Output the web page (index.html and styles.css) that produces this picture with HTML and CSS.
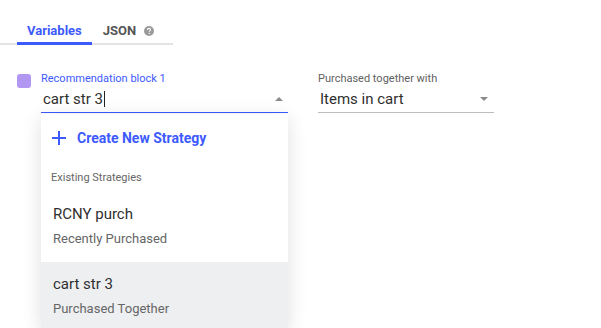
FILE: index.html
```html
<!DOCTYPE html>
<html lang="en">
<head>
    <meta charset="UTF-8">
    <meta name="viewport" content="width=device-width, initial-scale=1.0">
    <title>Recommendation block</title>
    <link rel="stylesheet" href="styles.css">
</head>
<body>
    <nav class="tabs">
        <div class="tab active">Variables</div>
        <div class="tab">JSON
            <svg class="help" width="10" height="10" viewBox="0 0 10 10">
                <circle cx="5" cy="5" r="5" fill="#9a9a9a"/>
                <path d="M3.5 3.9c0-.9.7-1.5 1.5-1.5s1.5.6 1.5 1.4c0 1-1.2 1-1.2 2" fill="none" stroke="#fff" stroke-width="1.1"/>
                <circle cx="5.3" cy="7.4" r=".65" fill="#fff"/>
            </svg>
        </div>
    </nav>

    <div class="block-row">
        <span class="swatch"></span>

        <div class="field field-strategy">
            <label class="field-label focused">Recommendation block 1</label>
            <div class="field-input focused">
                <span class="value">cart str 3<span class="caret"></span></span>
                <span class="arrow up"></span>
            </div>

            <!-- open dropdown -->
            <div class="menu">
                <div class="menu-create">
                    <svg width="14" height="14" viewBox="0 0 14 14">
                        <path d="M7 0v14M0 7h14" stroke="#3d5afe" stroke-width="2"/>
                    </svg>
                    <span>Create New Strategy</span>
                </div>
                <div class="menu-header">Existing Strategies</div>
                <div class="menu-item">
                    <div class="item-title">RCNY purch</div>
                    <div class="item-sub">Recently Purchased</div>
                </div>
                <div class="menu-item hover">
                    <div class="item-title">cart str 3</div>
                    <div class="item-sub">Purchased Together</div>
                </div>
            </div>
        </div>

        <div class="field field-with">
            <label class="field-label">Purchased together with</label>
            <div class="field-input">
                <span class="value">Items in cart</span>
                <span class="arrow down"></span>
            </div>
        </div>
    </div>
</body>
</html>
```

FILE: styles.css
```css
* {
    margin: 0;
    padding: 0;
    box-sizing: border-box;
    font-family: Roboto, 'Liberation Sans', sans-serif;
}

body {
    background: #ffffff;
    color: #333333;
    width: 601px;
    height: 328px;
    overflow: hidden;
}

/* Tabs */
.tabs {
    display: flex;
    width: 173px;
    padding-left: 17px;
    border-bottom: 2px solid #e4e4e6;
}

.tab {
    display: flex;
    align-items: center;
    gap: 8px;
    padding: 23px 11px 3px;
    line-height: 16px;
    font-size: 13px;
    font-weight: 700;
    color: #555555;
    border-bottom: 3px solid transparent;
    margin-bottom: -2px;
}

.tab.active {
    color: #3d5afe;
    border-bottom-color: #3d5afe;
    padding-left: 10px;
    padding-right: 10px;
}

.help {
    display: block;
    margin-top: -1px;
}

/* Row of fields */
.block-row {
    display: flex;
    align-items: flex-start;
    padding: 27px 0 0 17px;
}

.swatch {
    width: 14px;
    height: 14px;
    margin-top: 2px;
    margin-right: 10px;
    border-radius: 3px;
    background: #b196f2;
}

.field {
    position: relative;
}

.field-strategy {
    width: 247px;
    margin-right: 30px;
}

.field-with {
    width: 176px;
}

.field-label {
    display: block;
    font-size: 11px;
    line-height: 13px;
    color: #5f5f5f;
}

.field-label.focused {
    color: #3d5afe;
}

.field-input {
    display: flex;
    align-items: center;
    justify-content: space-between;
    height: 28px;
    padding: 0 5px 0 2px;
    border-bottom: 1px solid #bdbdbd;
}

.field-input.focused {
    border-bottom-color: #3d5afe;
}

.value {
    display: flex;
    align-items: center;
    font-size: 15px;
    color: #2f2f2f;
    padding-top: 1px;
}

.caret {
    width: 1px;
    height: 16px;
    margin-left: 1px;
    background: #222222;
}

.arrow {
    width: 0;
    height: 0;
    border-left: 4px solid transparent;
    border-right: 4px solid transparent;
    margin-top: 1px;
}

.arrow.up {
    border-bottom: 4px solid #8a8a8a;
}

.arrow.down {
    border-top: 4px solid #8a8a8a;
    margin-right: 1px;
}

/* Dropdown menu */
.menu {
    position: absolute;
    top: 42px;
    left: 0;
    width: 247px;
    max-height: 214px;
    overflow: hidden;
    background: #ffffff;
    box-shadow: 0 4px 18px rgba(0, 0, 0, 0.13);
}

.menu-create {
    display: flex;
    align-items: center;
    gap: 11px;
    height: 48px;
    padding-left: 11px;
    font-size: 14px;
    font-weight: 700;
    color: #3d5afe;
}

.menu-create svg {
    display: block;
}

.menu-header {
    padding: 10px 10px 8px;
    font-size: 11px;
    line-height: 12px;
    color: #666666;
}

.menu-item {
    height: 70px;
    padding: 12px 12px 0;
}

.menu-item.hover {
    background: #eeeff1;
}

.item-title {
    font-size: 15px;
    line-height: 20px;
    color: #2f2f2f;
}

.item-sub {
    margin-top: 6px;
    font-size: 13px;
    line-height: 18px;
    color: #666666;
}
```
